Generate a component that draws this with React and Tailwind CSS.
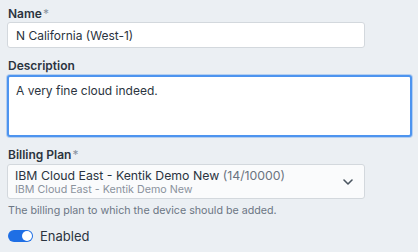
import React from "react";

export default function App() {
  return (
    <div className="h-[252px] w-[418px] overflow-hidden bg-[#ebeff3] pl-[7px] pt-[6px] font-['Inter',sans-serif] text-[#2b3440]">
      <div className="flex flex-col">
        <label className="pl-px text-[12px] font-semibold leading-[15px]">
          Name<span className="ml-[1px] font-normal text-[#8a949f]">*</span>
        </label>
        <input
          className="mt-[1px] h-[26px] w-[358px] rounded-[3px] border border-[#d3d8dd] bg-white px-[8px] text-[12px] text-[#2b3440] outline-none"
          defaultValue="N California (West-1)"
        />
      </div>

      <div className="mt-[10px] flex flex-col">
        <label className="pl-px text-[12px] font-semibold leading-[16px]">Description</label>
        <div className="mt-px h-[62px] w-[405px] rounded-[3px] border-2 border-[#4d94ef] bg-white px-[7px] pt-[6px] text-[12px] leading-[16px] shadow-[0_0_0_1px_rgba(77,148,239,0.35)]">
          A very fine cloud indeed.
        </div>
      </div>

      <div className="mt-[10px] flex flex-col">
        <label className="pl-px text-[12px] font-semibold leading-[16px]">
          Billing Plan<span className="ml-[1px] font-normal text-[#8a949f]">*</span>
        </label>
        <div className="mt-px flex h-[35px] w-[358px] items-center justify-between rounded-[3px] border border-[#d3d8dd] bg-[#fafbfc] pl-[7px] pr-[11px]">
          <div className="flex flex-col">
            <span className="text-[12.3px] leading-[15px]">
              IBM Cloud East - Kentik Demo New <span className="text-[#6b7480]">(14/10000)</span>
            </span>
            <span className="text-[10.7px] leading-[13px] text-[#8a929c]">IBM Cloud East - Kentik Demo New</span>
          </div>
          <svg width="10" height="6" viewBox="0 0 10 6" fill="none" stroke="#4a5560" strokeWidth="1.6" strokeLinecap="round" strokeLinejoin="round">
            <path d="M1 1l4 4 4-4" />
          </svg>
        </div>
        <p className="mt-[5px] pl-px text-[10.7px] leading-[14px] text-[#6b7684]">
          The billing plan to which the device should be added.
        </p>
      </div>

      <div className="mt-[10px] flex items-center gap-[7px] pl-px">
        <div className="flex h-[12px] w-[25px] items-center justify-end rounded-full bg-[#1f6fe5] pr-[1.5px]">
          <div className="h-[9.5px] w-[9.5px] rounded-full bg-white" />
        </div>
        <span className="text-[13px] leading-[16px]">Enabled</span>
      </div>
    </div>
  );
}
